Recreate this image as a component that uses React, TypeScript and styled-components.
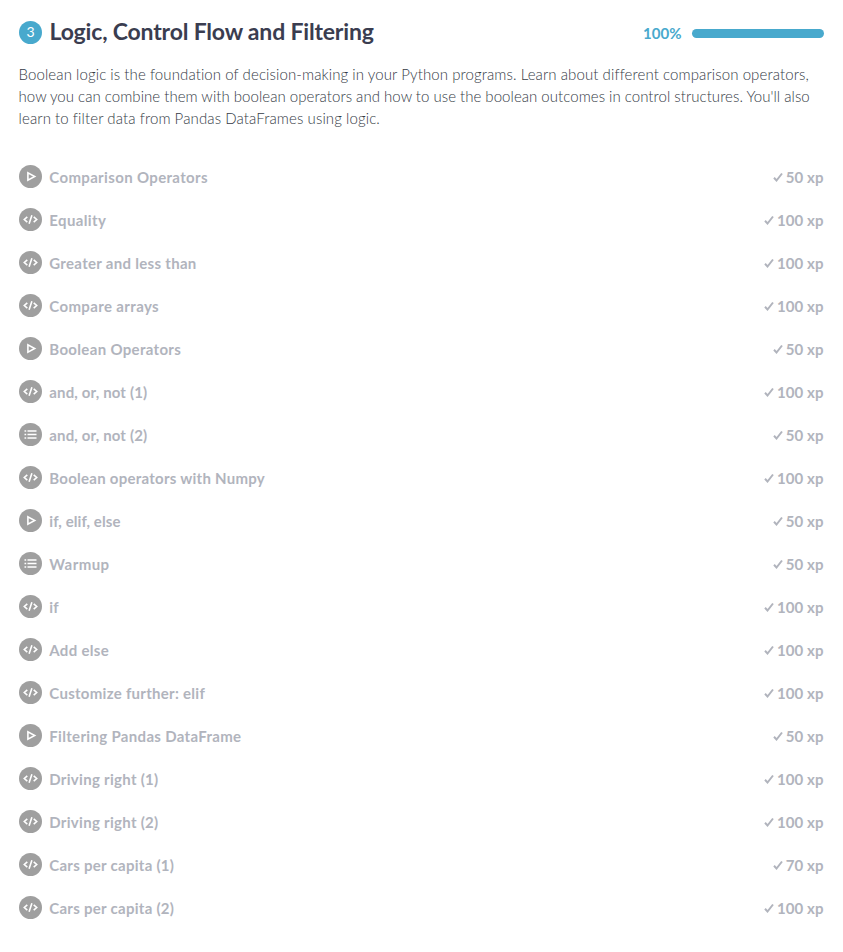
import React from "react";
import styled, { createGlobalStyle } from "styled-components";

type Kind = "video" | "code" | "list";

const Global = createGlobalStyle`
  * { box-sizing: border-box; }
  body { margin: 0; background: #fff; font-family: Lato, sans-serif; }
`;

const Chapter = styled.section`
  padding: 17px 19px 0;
  height: 952px;
  overflow: hidden;
`;

const Header = styled.header`
  display: flex;
  align-items: center;
  height: 28px;
`;

const Badge = styled.span`
  width: 23px;
  height: 23px;
  margin-top: 3px;
  border-radius: 50%;
  background: #48a9cd;
  color: #fff;
  font-size: 14px;
  line-height: 22px;
  text-align: center;
`;

const Title = styled.h1`
  flex: 1;
  margin: 0 0 0 7.5px;
  color: #3a3d50;
  font-size: 23px;
  line-height: 28px;
  font-weight: 700;
  letter-spacing: -0.18px;
`;

const Percent = styled.span`
  margin: 3px 10.5px 0 0;
  color: #48a9cd;
  font-size: 15px;
  font-weight: 700;
  line-height: 20px;
`;

const Progress = styled.div`
  width: 132px;
  height: 9px;
  margin-top: 5px;
  border-radius: 5px;
  background: #48a9cd;
`;

const Description = styled.p`
  margin: 18px 0 0;
  color: #353b46;
  font-size: 15px;
  font-weight: 300;
  line-height: 22px;
  white-space: nowrap;
`;

const Line = styled.span<{ $tracking: number; $wordGap?: number }>`
  display: block;
  margin-left: -0.5px;
  letter-spacing: ${(p) => p.$tracking}px;
  word-spacing: ${(p) => p.$wordGap ?? 0}px;
`;

const Exercises = styled.ul`
  list-style: none;
  margin: 26px 0 0;
  padding: 0;
`;

const Exercise = styled.li`
  display: flex;
  align-items: center;
  height: 43px;
  color: #b1b4bd;
  font-size: 15px;
  font-weight: 700;
`;

const Name = styled.span<{ $tracking: number }>`
  flex: 1;
  margin-left: 7.3px;
  letter-spacing: ${(p) => p.$tracking}px;
`;

const Points = styled.span`
  display: flex;
  align-items: center;
  gap: 3px;
  margin-right: 0.4px;
  letter-spacing: 0.1px;
`;

const KindIcon = ({ kind }: { kind: Kind }) => (
  <svg width="23" height="23" viewBox="0 0 23 23" fill="none" stroke="#fff" strokeWidth="1.6">
    <circle cx="11.5" cy="11.5" r="11.5" fill="#9f9f9f" stroke="none" />
    {kind === "video" && <path d="M8.9 7.8v7.4l6.8-3.7z" />}
    {kind === "code" && <path d="M8.3 8.9l-3 2.6 3 2.6M14.7 8.9l3 2.6-3 2.6M12.9 7.3l-2.8 8.4" />}
    {kind === "list" && <path d="M8.5 8h9M8.5 11.5h9M8.5 15h9M5.5 8h1.7M5.5 11.5h1.7M5.5 15h1.7" />}
  </svg>
);

const CheckMark = styled.svg`
  margin-top: 1px;
`;

const Check = () => (
  <CheckMark width="10" height="10" viewBox="0 0 10 10" fill="none" stroke="#b1b4bd" strokeWidth="2">
    <path d="M1 5.8l2.5 2.7L9 1.5" />
  </CheckMark>
);

const exercises: [Kind, string, number, number][] = [
  ["video", "Comparison Operators", 50, 0.35],
  ["code", "Equality", 100, 0.38],
  ["code", "Greater and less than", 100, 0.3],
  ["code", "Compare arrays", 100, 0.37],
  ["video", "Boolean Operators", 50, 0.33],
  ["code", "and, or, not (1)", 100, 0.15],
  ["list", "and, or, not (2)", 50, 0.15],
  ["code", "Boolean operators with Numpy", 100, 0.26],
  ["video", "if, elif, else", 50, 0.08],
  ["list", "Warmup", 50, 0.45],
  ["code", "if", 100, 0.2],
  ["code", "Add else", 100, 0.3],
  ["code", "Customize further: elif", 100, 0.28],
  ["video", "Filtering Pandas DataFrame", 50, 0.32],
  ["code", "Driving right (1)", 100, 0.29],
  ["code", "Driving right (2)", 100, 0.29],
  ["code", "Cars per capita (1)", 70, 0.27],
  ["code", "Cars per capita (2)", 100, 0.27],
];

export default function App() {
  return (
    <Chapter>
      <Global />
      <Header>
        <Badge>3</Badge>
        <Title>Logic, Control Flow and Filtering</Title>
        <Percent>100%</Percent>
        <Progress />
      </Header>
      <Description>
        <Line $tracking={0.11} $wordGap={-0.15}>Boolean logic is the foundation of decision-making in your Python programs. Learn about different comparison operators, </Line>
        <Line $tracking={0.055} $wordGap={-0.15}>how you can combine them with boolean operators and how to use the boolean outcomes in control structures. You'll also </Line>
        <Line $tracking={0.12} $wordGap={-0.15}>learn to filter data from Pandas DataFrames using logic.</Line>
      </Description>
      <Exercises>
        {exercises.map(([kind, name, xp, tracking]) => (
          <Exercise key={name}>
            <KindIcon kind={kind} />
            <Name $tracking={tracking}>{name}</Name>
            <Points><Check />{xp} xp</Points>
          </Exercise>
        ))}
      </Exercises>
    </Chapter>
  );
}
